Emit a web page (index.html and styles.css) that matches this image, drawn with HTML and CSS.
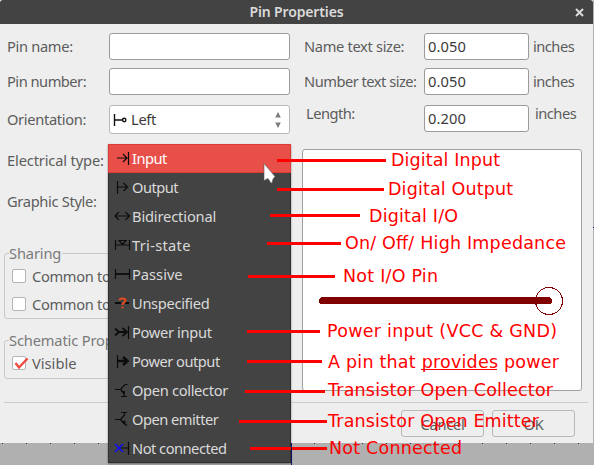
FILE: index.html
```html
<!DOCTYPE html>
<html lang="en">
<head>
<meta charset="utf-8">
<title>Pin Properties</title>
<link rel="stylesheet" href="styles.css">
</head>
<body>
<main class="dialog">
  <header class="titlebar"><span>Pin Properties</span>
    <svg class="close" width="9" height="9" viewBox="0 0 9 9"><path d="M1 1 8 8M8 1 1 8"/></svg>
  </header>
  <div class="content">
    <section class="left">
      <div class="row"><label>Pin name:</label><div class="field"></div></div>
      <div class="row"><label class="tight">Pin number:</label><div class="field"></div></div>
      <div class="row orient"><label>Orientation:</label>
        <div class="field combo">
          <svg width="14" height="14" viewBox="0 0 14 14"><path d="M1.5 1V13M2 7H9" /><circle cx="11.2" cy="7" r="1.7"/></svg>
          <span>Left</span>
          <svg class="spin" width="6" height="16" viewBox="0 0 6 16"><path d="M3 0 5.8 5.5H.2ZM3 16 .2 10.5H5.8Z"/></svg>
        </div>
      </div>
      <div class="row plain"><label class="electrical">Electrical type:</label></div>
      <div class="row plain"><label>Graphic Style:</label></div>
      <fieldset class="sharing">
        <legend>Sharing</legend>
        <div class="check"><i class="box"></i><span>Common to</span></div>
        <div class="check"><i class="box"></i><span>Common to</span></div>
      </fieldset>
      <fieldset class="schematic">
        <legend>Schematic Properties</legend>
        <div class="check"><i class="box"><svg width="16" height="13" viewBox="0 0 16 13"><path d="M2.5 6 6 10.5 14.5 1.5"/></svg></i><span class="loose">Visible</span></div>
      </fieldset>
    </section>
    <section class="right">
      <div class="row"><label>Name text size:</label><div class="field">0.050</div><span class="tight">inches</span></div>
      <div class="row"><label class="tight">Number text size:</label><div class="field">0.050</div><span class="tight">inches</span></div>
      <div class="row length"><label class="tight">Length:</label><div class="field">0.200</div><span class="tight">inches</span></div>
      <div class="preview">
        <svg width="278" height="240" viewBox="303 150 278 240" shape-rendering="crispEdges">
          <path d="M322.5 300.5H548.5"/><circle cx="549" cy="301" r="13.5"/>
        </svg>
      </div>
    </section>
  </div>
  <footer class="buttons"><button>Cancel</button><button>OK</button></footer>
</main>
<div class="canvas"></div>

<ul class="menu">
  <li class="active tight"><svg viewBox="0 0 17 16"><path d="M3 8H13M9 4 13 8 9 12M14.5 2V15"/></svg>Input</li>
  <li class="tight"><svg viewBox="0 0 17 16"><path d="M3.5 2V15M4 8H13M9.5 4 13.5 8 9.5 12"/></svg>Output</li>
  <li class="slight"><svg viewBox="0 0 17 16"><path d="M1.5 8H15M5 4 1 8 5 12M11.5 4 15.5 8 11.5 12"/></svg>Bidirectional</li>
  <li class="wide"><svg viewBox="0 0 17 16"><path d="M1.5 3V13M15.5 3V13M2 8H15M5 3.5H12L8.5 7.5Z"/></svg>Tri-state</li>
  <li class="loose"><svg viewBox="0 0 17 16"><path d="M1.5 3V13M15.5 3V13"/><path class="thick" d="M2 8H15"/></svg>Passive</li>
  <li><svg viewBox="0 0 17 16"><path class="thick" d="M1 8H7M11 8H15"/><path class="orange" d="M5.5 5.2C5.5 2.8 11.5 2.8 11.5 5.3 11.5 7.5 8.5 7.4 8.5 10M8.5 11.5V13.5"/></svg>Unspecified</li>
  <li><svg viewBox="0 0 17 16"><path d="M14.5 2V15"/><path class="thick" d="M1 4.5 5 8 1 11.5M4 8H13M8.5 4 13 8 8.5 12"/></svg>Power input</li>
  <li class="tight"><svg viewBox="0 0 17 16"><path d="M3.5 2V15"/><path class="bold" d="M4 8H13M9 4 13.5 8 9 12"/></svg>Power output</li>
  <li><svg viewBox="0 0 17 16"><path d="M1 7.5H6.5L11 2.5H13.5M6.5 7.5 10 11V14M7 14.5H13"/><path class="solid" d="M7 9H11V13Z"/></svg>Open collector</li>
  <li class="tight"><svg viewBox="0 0 17 16"><path d="M1 8.5H6.5L10.5 4V1.5M7 1.5H13M6.5 8.5 11.5 14H13.5"/><path class="solid" d="M7 10.5 11.5 9.5V14Z"/></svg>Open emitter</li>
  <li class="tight"><svg viewBox="0 0 17 16"><path d="M5 8H14M14.5 2V15"/><path class="blue" d="M1 4 9 12M9 4 1 12"/></svg>Not connected</li>
</ul>

<svg class="notes" width="594" height="465" viewBox="0 0 594 465">
  <path class="cursor" d="M264 163.5V180.5L268 178.5 271 183H272L273 179 275 176.5Z"/>
  <path class="lines" d="M277 160.5H386M277 189.5H384M270 215.5H360M267 243.5H341M248 276.5H335M247 331.5H320M247 361.5H322M245 391.5H325M239 421.5H327M250 448.5H327"/>
  <g class="texts">
    <text x="391" y="166" textLength="109">Digital Input</text>
    <text x="388" y="195" textLength="125">Digital Output</text>
    <text x="369" y="222" textLength="89">Digital I/O</text>
    <text x="345" y="249" textLength="221">On/ Off/ High Impedance</text>
    <text x="343" y="282" textLength="95">Not I/O Pin</text>
    <text x="327" y="337" textLength="230">Power input (VCC &amp; GND)</text>
    <text x="328" y="368" textLength="231">A pin that provides power</text>
    <text x="328" y="396" textLength="225">Transistor Open Collector</text>
    <text x="328" y="427" textLength="211">Transistor Open Emitter</text>
    <text x="329" y="454" textLength="133">Not Connected</text>
  </g>
  <path class="underline" d="M421 369.5H497"/>
  <path class="wire" d="M291.5 443V465M593 227.5H594"/>
</svg>
</body>
</html>
```
FILE: styles.css
```css
* { box-sizing: border-box; }
body {
  margin: 0;
  width: 594px;
  height: 465px;
  overflow: hidden;
  position: relative;
  background: #b0b0b0;
  font: 14.67px/20px "Noto Sans", sans-serif;
  letter-spacing: -.33px;
  color: #5c5c5c;
}
.tight { letter-spacing: -.5px; }
.slight { letter-spacing: -.15px; }
.loose { letter-spacing: 0; }
.wide { letter-spacing: .3px; }
.electrical { letter-spacing: -.15px; }
.dialog {
  width: 593px;
  height: 443px;
  background: #eeeeee;
  display: flex;
  flex-direction: column;
}
.titlebar {
  height: 24px;
  flex: none;
  display: flex;
  align-items: center;
  background: #434343;
  color: #dadada;
  font-weight: 600;
  font-size: 14px;
  letter-spacing: -.15px;
  border-radius: 3px 3px 0 0;
}
.titlebar span { flex: 1; text-align: center; padding-left: 18px; }
.close { margin-right: 9px; fill: none; stroke: #dadada; stroke-width: 2; }
.content { display: flex; height: 378px; padding: 9px 0 0 4px; }
.left { width: 298px; }
.right { width: 280px; }
.row { display: flex; align-items: center; height: 27px; margin-bottom: 8px; }
.row label, .right .row > span { padding-bottom: 2px; }
.left .row { padding-left: 3px; }
.left label { width: 102px; white-space: nowrap; }
.right .row { padding-left: 2px; white-space: nowrap; }
.right label { width: 120px; flex: none; }
.right .row > span { margin-left: 4px; }
.field {
  width: 105px;
  height: 27px;
  flex: none;
  border: 1px solid #9b9b9b;
  border-radius: 3px;
  background: #fff;
  color: #3b3b3b;
  padding: 3px;
  line-height: 19px;
  letter-spacing: .1px;
}
.left .field { width: 181px; }
.row.orient { height: 29px; margin: 10px 0 10px; }
.field.combo { height: 29px; display: flex; align-items: center; border-color: #b8b8b8; }
.combo svg { fill: none; stroke: #111; stroke-width: 1.4; }
.combo span { margin-left: 4px; flex: 1; letter-spacing: -.3px; }
.combo .spin { fill: #7c7c7c; stroke: none; margin-right: 5px; }
.row.plain { height: 33px; margin-bottom: 8px; }
.right .length { margin: 10px 0 17px; }
.right .length label { padding-left: 2px; }
.right .length label, .right .length > span { margin-bottom: 9px; }
.right .length > span { margin-left: 6px; }
fieldset {
  width: 287px;
  margin: 0;
  padding: 0 0 0 7px;
  border: 1px solid #c8c8c8;
  border-radius: 3px;
}
legend { padding: 0 1px 0 0; margin-left: -3px; color: #7a7a7a; line-height: 20px; letter-spacing: -.15px; }
.sharing { height: 76px; margin-top: 25px; }
.schematic { height: 49px; margin-top: 11px; }
.check { display: flex; align-items: center; height: 20px; margin: 3px 0 8px; }
.box {
  width: 14px;
  height: 14px;
  flex: none;
  margin-right: 6px;
  border: 1px solid #b5b5b5;
  border-radius: 2px;
  background: #fff;
}
.box svg { display: block; fill: none; stroke: #f04a43; stroke-width: 2.4; }
.preview { width: 280px; height: 242px; border: 1px solid #a0a0a0; border-radius: 3px; background: #fff; }
.preview svg { display: block; fill: none; stroke: #800000; }
.preview path { stroke-width: 7; stroke-linecap: round; }
.buttons {
  flex: 1;
  display: flex;
  justify-content: flex-end;
  gap: 8px;
  margin: 0 5px 0 4px;
  padding: 7px 13px 0 0;
  border-top: 1px solid #cdcdcd;
}
button {
  width: 83px;
  height: 27px;
  padding: 0;
  font: inherit;
  letter-spacing: -.3px;
  color: #5c5c5c;
  background: #eeeeee;
  border: 1px solid #b8b8b8;
  border-radius: 3px;
}
.canvas {
  height: 1px;
  background: repeating-linear-gradient(90deg, transparent 0 2px, #333 2px 3px, transparent 3px 24px);
}
.menu {
  position: absolute;
  left: 108px;
  top: 144px;
  width: 183px;
  height: 319px;
  margin: 0;
  padding: 0;
  list-style: none;
  background: #434343;
  color: #dadada;
  box-shadow: inset 0 0 0 1px #303030, 0 1px 2px #0006;
}
.menu li { display: flex; height: 29px; padding-left: 6px; line-height: 29px; }
.menu .active { background: #e84f49; color: #fff; box-shadow: inset 0 0 0 1px #dd3b36; }
.menu svg {
  width: 17px;
  height: 16px;
  margin: 6px 1px 0 0;
  fill: none;
  stroke: #0c0c0c;
  stroke-width: 1.2;
}
.menu .thick { stroke-width: 1.8; }
.menu .bold { stroke-width: 2.5; }
.menu .orange { stroke: #e84a1c; stroke-width: 2; }
.menu .blue { stroke: #1010f0; stroke-width: 1.7; }
.menu .solid { fill: #0c0c0c; stroke: none; }
.notes { position: absolute; left: 0; top: 0; letter-spacing: 0; }
.cursor { fill: #fff; stroke: #555; stroke-width: .6; }
.lines { stroke: #f00; stroke-width: 3; }
.texts { fill: #f00; font: 17.5px "DejaVu Sans", sans-serif; }
.underline { stroke: #f00; }
.wire { stroke: #101060; }
```
